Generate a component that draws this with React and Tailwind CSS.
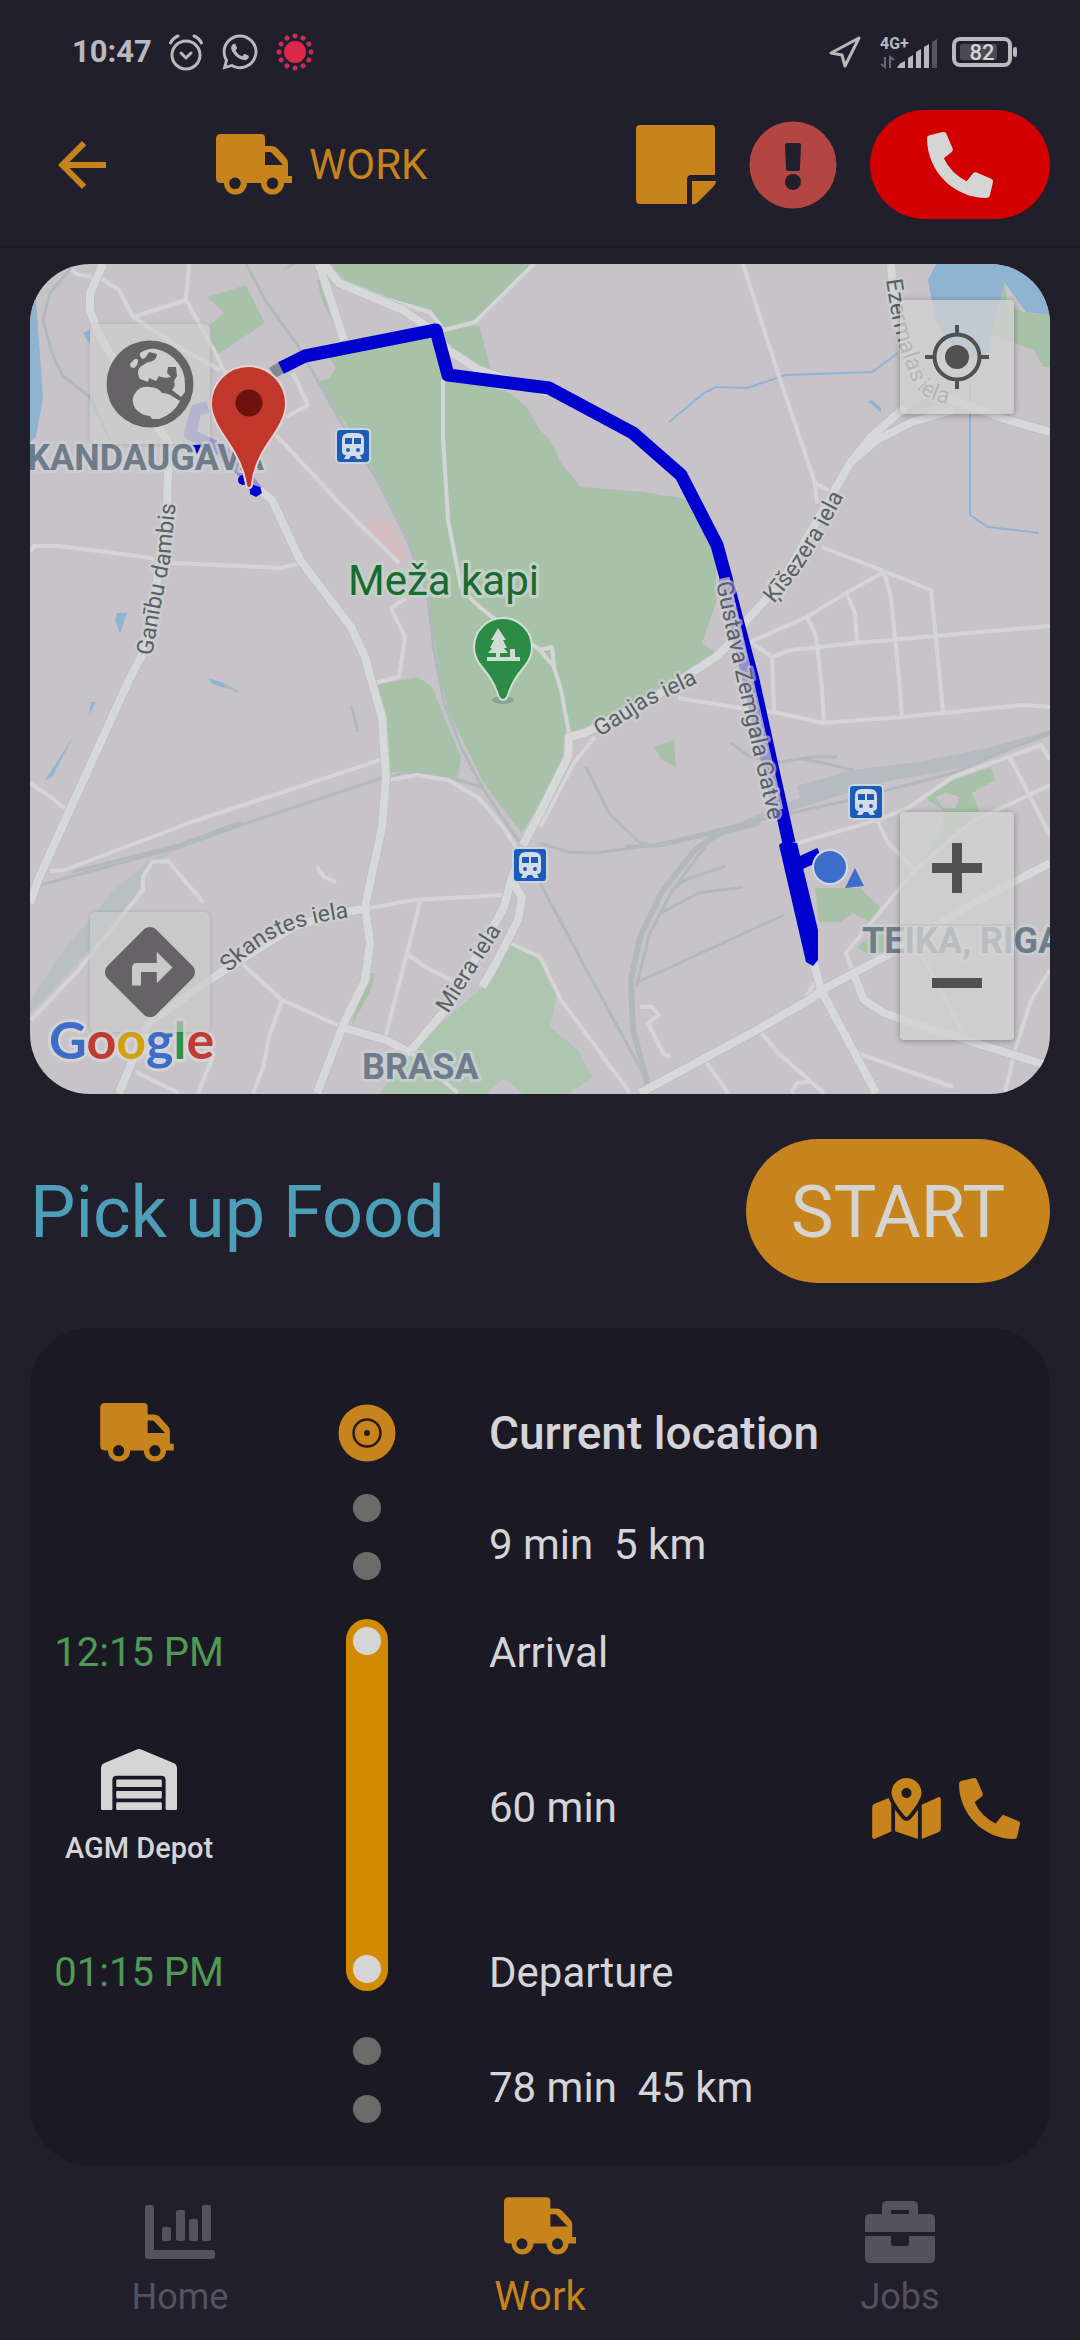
import React from "react";
import { FaMapMarkedAlt, FaPhoneAlt, FaWarehouse, FaWhatsapp } from "react-icons/fa";
import { MdArrowBack, MdDirections } from "react-icons/md";

/* ---------- icons ---------- */

function Truck({ className }) {
  return (
    <svg viewBox="0 0 76 62" className={className} fill="currentColor" aria-hidden="true">
      <path
        fillRule="evenodd"
        d="M5 0H45Q49 0 49 4V12H55Q59 12 61 14L70 24Q72 26 72 29V42H76V49H68A11.5 11.5 0 1 1 45 49H31A11.5 11.5 0 1 1 8 49H5Q0 49 0 44V5Q0 0 5 0ZM49 18V31H67L56 19Q55 18 53 18ZM19 43.5A5.8 5.8 0 1 0 19 55.100A5.8 5.8 0 1 0 19 43.5ZM56.500 43.5A5.800 5.800 0 1 0 56.500 55.100A5.800 5.800 0 1 0 56.500 43.500Z"
      />
    </svg>
  );
}

function Note() {
  return (
    <svg viewBox="0 0 80 80" className="w-20 h-20" fill="currentColor" aria-hidden="true">
      <path d="M4 0H76Q79 0 79 4V50H55Q51 50 51 55V79H4Q0 79 0 75V4Q0 0 4 0Z" />
      <path d="M56 56H80Q80 59 77 62L62 77Q59 80 56 79Z" />
    </svg>
  );
}

function Alarm() {
  return (
    <svg viewBox="0 0 36 38" className="w-9 h-[38px]" fill="none" stroke="currentColor" strokeWidth="3" strokeLinecap="round" strokeLinejoin="round" aria-hidden="true">
      <circle cx="18" cy="22" r="14" />
      <path d="M13 20L18 25L23 20" />
      <path d="M2.500 10Q5 5 10 3M33.500 10Q31 5 26 3" />
    </svg>
  );
}

function RecordDot() {
  return (
    <svg viewBox="-19 -19 38 38" className="w-[38px] h-[38px]" fill="#dc2748" aria-hidden="true">
      <circle r="11" />
      {[0, 30, 60, 90, 120, 150, 180, 210, 240, 270, 300, 330].map((a) => (
        <circle key={a} cx="0" cy="-16" r="2.500" transform={`rotate(${a})`} fill="#c23157" />
      ))}
    </svg>
  );
}

function Signal() {
  return (
    <svg viewBox="0 -4 60 40" className="w-[60px] h-10" fill="currentColor" aria-hidden="true">
      <text x="0" y="13" className="font-[Roboto] text-[16px] font-bold">4G+</text>
      <path d="M5 21V31L1 28M10 32V21L14 24" fill="none" stroke="#6a6872" strokeWidth="2" />
      <path d="M17 32Q19 27 25 25V32ZM28 22L33 19V32H28ZM36 16L41 13V32H36ZM44 11L49 8V32H44Z" />
      <path d="M52 6L57 3V32H52Z" fill="#55535d" />
    </svg>
  );
}

function Battery() {
  return (
    <svg viewBox="0 0 68 30" className="w-[68px] h-[30px]" aria-hidden="true">
      <rect x="2" y="2" width="56" height="26" rx="6" fill="none" stroke="#b9b8bd" strokeWidth="4" />
      <rect x="8" y="7" width="37" height="16" rx="2" fill="#4b4954" />
      <rect x="61" y="10" width="4" height="10" rx="2" fill="#b9b8bd" />
      <text x="30" y="23" textAnchor="middle" fill="#d6d5d9" className="font-[Roboto] text-[22px] font-medium">82</text>
    </svg>
  );
}

function Globe() {
  return (
    <svg viewBox="-44 -44 88 88" className="w-[88px] h-[88px]" aria-hidden="true">
      <circle r="43.500" fill="#666367" />
      <g fill="#cdcdcd">
        <path d="M-10 -31Q-2 -36 6 -35Q20 -32 28 -21Q35 -12 35 0V8L31 13Q26 9 22 6Q26 2 24 -3L27 -8L26 -17H18L17 -11L21 -7Q14 -5 9 -8L6 -3L-1 -6L-2 -2L-10 -5Q-14 -12 -10 -17L-2 -22Q6 -22 7 -30L-1 -32L-4 -27L-7 -25Q-11 -27 -10 -31Z" />
        <path d="M-20 -20Q-14 -28 -12 -24Q-12 -18 -16 -16Q-20 -16 -20 -20Z" />
        <path d="M-14 8Q-10 2 0 3Q8 3 12 9Q18 9 22 12L30 17Q24 30 9 35L2 35L0 32Q-10 31 -15 24Q-20 15 -14 8Z" />
      </g>
    </svg>
  );
}

function Crosshair() {
  return (
    <svg viewBox="-32 -32 64 64" className="w-16 h-16" fill="none" stroke="#515151" strokeWidth="4" aria-hidden="true">
      <circle r="22.500" />
      <circle r="12" fill="#515151" stroke="none" />
      <path d="M0 -32V-22M0 32V22M-32 0H-22M32 0H22" />
    </svg>
  );
}

function Target() {
  return (
    <svg viewBox="-29 -29 58 58" className="w-[58px] h-[58px]" aria-hidden="true">
      <circle r="28.500" fill="#c7841d" />
      <circle r="13.500" fill="none" stroke="#2a1c14" strokeWidth="2.500" />
      <circle r="3" fill="#2a1c14" />
    </svg>
  );
}

function Chart() {
  return (
    <svg viewBox="0 0 70 54" className="w-[70px] h-[54px]" fill="currentColor" aria-hidden="true">
      <path d="M2 0H6Q9 0 9 3V45H67Q70 45 70 48V51Q70 54 67 54H3Q0 54 0 51V3Q0 0 2 0Z" />
      <rect x="17" y="22" width="9" height="14" rx="2" />
      <rect x="31" y="5" width="9" height="31" rx="2" />
      <rect x="44" y="14" width="9" height="22" rx="2" />
      <rect x="57" y="0" width="9" height="36" rx="2" />
    </svg>
  );
}

function Briefcase() {
  return (
    <svg viewBox="0 0 70 62" className="w-[70px] h-[62px]" fill="currentColor" aria-hidden="true">
      <path d="M5 13H17V5Q17 0 22 0H48Q53 0 53 5V13H65Q70 13 70 18V31H0V18Q0 13 5 13ZM26 9V13H44V9Z" fillRule="evenodd" />
      <path d="M0 35H26V42Q26 45 29 45H41Q44 45 44 42V35H70V57Q70 62 65 62H5Q0 62 0 57Z" />
    </svg>
  );
}

/* ---------- map drawing ---------- */

const parks = [
  "207,297 246,285 265,323 214,357 210,325 224,313",
  "329,264 534,264 479,320 444,330 430,312 389,300 345,280",
  "317,280 324,276 342,328 334,325 322,300",
  "444,330 479,325 492,373 479,370 448,350",
  "281,272 296,264 290,264",
  "303,357 436,330 448,372 510,393 527,407 540,430 550,440 561,463 581,487 643,492 681,498 702,503 716,550 716,603 702,643 716,653 650,697 595,723 571,733 568,747 540,803 522,833 506,813 482,780 448,710 441,680 427,593 406,537 379,480 348,427 317,383 329,378 336,368 324,350",
  "375,685 418,677 432,687 461,757 458,777 406,771 388,773 382,717",
  "654,747 674,740 676,767 662,760",
  "815,888 860,888 881,908 871,923 853,913 840,922 819,922",
  "924,797 953,780 991,767 995,780 972,793 979,810 946,847 919,867 943,827 943,810",
  "857,947 884,926 884,952 870,956",
  "365,973 375,973 370,992 351,1027",
  "1005,282 1008,307 1029,313 1050,315 1050,367 1043,367 1034,350 998,337 991,333",
  "899,415 936,392 952,400",
];

const waters = [
  "30,300 36,300 43,397 36,437 30,442",
  "936,264 1050,264 1050,315 1026,312 1005,283 988,353 964,360 936,323 928,280",
  "117,613 127,613 120,633 115,620",
  "208,678 224,683 228,689 212,684",
  "91,702 96,702 89,715",
  "73,737 52,777 45,780",
  "83,333 90,330 90,345",
  "868,401 872,400 881,408 881,413",
];

const streams = [
  "669,422 704,393 716,387 747,388 786,375 872,372 898,353",
  "970,383 970,515 988,527 1039,533",
];

const rails = [
  "71,268 50,293 43,320 52,353 62,375 90,397 110,440",
  "246,264 265,300 296,343 344,427 379,483 406,537 427,593 434,650 444,703 461,747 482,787 499,813 520,843",
  "41,885 179,847 241,825 382,778",
  "72,872 179,845 241,822",
  "388,778 406,772 448,777 482,787",
  "224,685 239,692",
  "351,705 358,732",
  "540,843 568,852 595,853 654,845 760,820 850,800 953,773 1050,732",
  "586,767 609,813 640,843 654,845",
  "626,846 660,846 720,832",
  "731,743 750,757 781,762 812,757 838,757",
  "800,759 819,762 853,770",
  "540,883 592,980 643,1073",
  "726,866 685,880 672,890",
  "743,887 698,893 661,913",
  "784,915 636,983",
  "712,837 671,893 650,933 636,987",
];

const mainRoads = [
  "103,264 90,293 90,310 98,333 138,400 169,443 167,507 152,617 141,657 129,680 38,880 30,903",
  "260,490 272,500 300,560 351,627 365,657 374,690 382,717 386,777 382,827 365,907 370,943 365,980 344,1023 317,1093",
  "319,264 344,340",
  "324,264 339,283 403,310 427,327 448,350 479,370 548,393",
  "370,908 337,913 293,927 220,973 148,1023 119,1093",
  "523,850 511,880 504,907 482,947 448,1007 411,1050",
  "513,883 522,897 518,920 496,963 482,987",
  "523,845 540,813 568,757 569,737 585,733 650,700 716,657 733,640 747,620 781,583 833,493 850,463 871,437 905,407",
  "891,264 895,317 919,383 953,400 1008,420 1050,432",
  "850,463 877,440 912,422 953,410",
  "640,1093 757,1030 809,1000 822,990 884,957 974,903 1050,863",
  "814,963 821,990 876,1093",
  "344,1028 386,1040 411,1053",
  "852,970 864,1000 884,1013 919,1025 1039,1063 1050,1068",
];

const minorRoads = [
  "71,270 79,275 100,278 119,290 133,317 179,347 220,370",
  "133,317 186,300 189,264",
  "186,300 214,350 238,400",
  "339,280 389,300 430,312 444,330 475,322 534,264",
  "30,552 34,546 59,546 145,557 172,563 282,568 300,563",
  "276,435 358,523 399,563",
  "286,417 308,405 293,373",
  "406,598 391,608 405,637 399,677 375,683",
  "443,380 443,437 448,520 461,587 475,603 492,617 540,650 554,667",
  "540,650 552,647 554,667 561,690 569,733",
  "30,783 52,798 67,810",
  "50,871 65,870 189,823 380,760",
  "388,780 417,775 448,780 479,798 503,827 516,847",
  "203,902 168,861 152,862 143,877 143,890 76,973 31,1020",
  "370,908 413,900 504,895",
  "421,898 386,1035",
  "408,955 427,968 455,982",
  "241,963 282,1000 344,1028",
  "411,1053 458,1093",
  "282,1000 269,1037 263,1068 253,1093",
  "136,1072 179,1093",
  "213,1057 198,1093",
  "317,867 324,877 336,882",
  "510,943 540,957 561,1000 630,1093",
  "595,737 574,763 540,827",
  "743,264 778,373 815,483 817,503",
  "815,483 833,493",
  "822,547 886,572 931,590 941,690 943,713",
  "750,642 807,617 846,593 884,572 891,597 895,637 900,690 902,717",
  "807,617 815,633 817,643 822,690 824,722",
  "846,593 855,613 857,643",
  "750,642 772,657 791,650 855,643 1050,626",
  "772,657 774,710",
  "678,698 733,707 774,712 824,723 902,717 943,713 1022,705 1050,707",
  "815,983 802,1003",
  "798,843 877,820 908,808 953,777 1041,745 1050,760",
  "1010,758 1050,835",
  "1050,785 970,823 915,870 884,907 846,953 852,970",
  "877,820 888,843 915,870",
  "1050,970 1031,1000 1015,1050 1005,1093",
  "919,950 967,1040",
  "759,1030 778,1053 809,1080 824,1093",
  "705,1060 728,1093",
  "857,1053 953,1087",
  "640,1007 652,1007 659,1015 648,1023 664,1055 671,1056",
  "791,1093 797,1083 809,1082",
];

function Lines({ items, stroke, width }) {
  return (
    <g fill="none" stroke={stroke} strokeWidth={width} strokeLinejoin="round">
      {items.map((p) => (
        <polyline key={p} points={p} />
      ))}
    </g>
  );
}

function Areas({ items, fill }) {
  return (
    <g fill={fill}>
      {items.map((p) => (
        <polygon key={p} points={p} />
      ))}
    </g>
  );
}

function Station({ x, y }) {
  return (
    <g transform={`translate(${x} ${y})`}>
      <rect x="-18" y="-18" width="36" height="36" rx="5" fill="#c9d6e2" />
      <rect x="-16" y="-16" width="32" height="32" rx="3" fill="#1c5cb8" />
      <path d="M-11 -6Q-11 -13 -4 -13H4Q11 -13 11 -6V5Q11 9 7 9L9 13H4L2 10H-2L-4 13H-9L-7 9Q-11 9 -11 5Z" fill="#d3dce6" />
      <path d="M-8 -8H-1V-2H-8ZM1 -8H8V-2H1Z" fill="#1c5cb8" />
      <circle cx="-5" cy="4" r="2" fill="#1c5cb8" />
      <circle cx="5" cy="4" r="2" fill="#1c5cb8" />
    </g>
  );
}

const streets = [
  ["Ganību dambis", "M152 656L160 610L170 560L176 500"],
  ["Gaujas iela", "M600 737L645 708L710 677"],
  ["Ķīšezera iela", "M774 604L801 570L826 530L852 480"],
  ["Skanstes iela", "M229 973Q258 943 290 931Q311 922 360 916"],
  ["Miera iela", "M448 1014L474 973L505 925"],
  ["Ezermalas iela", "M886 280L892 318L900 348L912 382Q920 396 936 401L975 412"],
  ["Gustava Zemgala Gatve", "M716 583L738 685L772 835"],
];

function MapDrawing() {
  return (
    <svg viewBox="30 264 1020 830" className="block w-full h-auto" role="img" aria-label="Route map">
      <rect x="30" y="264" width="1020" height="830" fill="#c8c3c8" />
      <Areas items={waters} fill="#8fb4d2" />
      <Areas items={parks} fill="#a8c2a9" />
      <polygon points="482,988 511,945 540,957 557,993 550,1027 578,1050 592,1077 568,1094 523,1094 504,1078 486,1094 379,1094 410,1053 424,1038" fill="#aec5b0" />
      <polygon points="936,797 946,793 960,797 955,808 943,808" fill="#c8c3c8" />
      <polygon points="360,527 379,517 389,523 408,553 399,563" fill="#d3bdbe" />
      <Lines items={streams} stroke="#8fb4d2" width="2" />
      <polygon points="797,786 853,770 919,762 988,748 1050,730 1050,736 960,768 884,782 802,807 745,826 730,826 800,798" fill="#b5bbbe" />
      <polygon points="179,846 148,862 114,890 60,955 30,1000 30,1014 80,960 132,902 150,868" fill="#b9c0c2" />
      <Lines items={rails} stroke="#b2b9bc" width="3" />
      <Lines items={["760,822 719,833 695,850 661,893 640,937 631,980 633,1030 650,1093"]} stroke="#b2b9bc" width="6" />
      <Lines items={minorRoads} stroke="#d5d4d6" width="4" />
      <Lines items={mainRoads} stroke="#bfc0c2" width="10" />
      <Lines items={mainRoads} stroke="#d7d8d9" width="8" />

      {/* route */}
      <Lines items={["208,407 196,410 190,434 220,449 241,470 257,491"]} stroke="#9692cb" width="12" />
      <g fill="#0000cf">
        <path d="M192 445H202L197 454Z" />
        <circle cx="243" cy="480" r="5" />
        <path d="M250 484L260 487L262 493L256 497L250 494Z" />
      </g>
      <Lines items={["272,373 286,365"]} stroke="#7f8c98" width="12" />
      <Lines items={["281,368 305,356 436,330 448,375 549,388 633,433 681,475 717,545 726,578 753,680 789,843"]} stroke="#0000cf" width="13" />
      <path d="M779 845L784 841L797 843L818 930V960L813 966L806 962Z" fill="#0000cf" />
      <Lines items={["798,864 820,854"]} stroke="#0000cf" width="13" />
      <Lines items={["724,578 748,680 778,810"]} stroke="#9692cb" width="11" />

      {/* street names */}
      <g className="font-[Roboto] text-[23px]" fill="#5b6064" stroke="#d0d3d5" strokeWidth="5" strokeLinejoin="round" strokeOpacity="0.6" style={{ paintOrder: "stroke" }}>
        {streets.map(([name, d], i) => (
          <React.Fragment key={name}>
            <path id={`street-${i}`} d={d} fill="none" stroke="none" />
            <text>
              <textPath href={`#street-${i}`}>{name}</textPath>
            </text>
          </React.Fragment>
        ))}
      </g>

      {/* districts */}
      <g className="font-[Roboto] text-[36px] font-bold" fill="#6f7c8b" stroke="#ccd0d3" strokeWidth="6" strokeLinejoin="round" strokeOpacity="0.8" style={{ paintOrder: "stroke" }}>
        <text x="264" y="470" textAnchor="end">KANDAUGAVA</text>
        <text x="362" y="1079">BRASA</text>
        <text x="862" y="953">TEIKA, RIGA</text>
      </g>
      <text x="348" y="595" className="font-[Roboto] text-[42px]" fill="#186a32" stroke="#c3d0c6" strokeWidth="6" strokeLinejoin="round" style={{ paintOrder: "stroke" }}>Meža kapi</text>

      <Station x={353} y={446} />
      <Station x={530} y={865} />
      <Station x={866} y={802} />

      {/* park pin */}
      <ellipse cx="503" cy="700" rx="11" ry="4" fill="#8aa58d" />
      <path d="M503 700Q499 700 497 692Q493 680 482 667Q474 658 474 647A29 29 0 0 1 532 647Q532 658 524 667Q513 680 509 692Q507 700 503 700Z" fill="#2b8b47" stroke="#cfe0d3" strokeWidth="2" />
      <path d="M498 628L506 640H503L507 648H504L508 653H500V657H510V649H515V657H520V661H487V657H496V653H488L492 648H490L494 640H491Z" fill="#cfdcd2" />

      {/* current position */}
      <circle cx="830" cy="867" r="18" fill="#d5d9e0" />
      <circle cx="830" cy="867" r="16" fill="#3b6fc9" />
      <path d="M855 868L864 886L845 888Z" fill="#3b6fc9" />

      {/* destination pin */}
      <path d="M249 488Q246 488 246 484Q243 463 226 439Q211 418 211 404A37.500 38 0 0 1 286 404Q286 418 271 439Q254 463 252 484Q252 488 249 488Z" fill="#c1372c" stroke="#e0d5d4" strokeWidth="2" />
      <circle cx="249" cy="403" r="13.500" fill="#6e120e" />

      <text x="49" y="1059" className="font-[Lato] text-[52px] font-bold" stroke="#d4d3d5" strokeWidth="6" strokeLinejoin="round" style={{ paintOrder: "stroke" }}>
        <tspan fill="#3d6dc9">G</tspan>
        <tspan fill="#c23a34">o</tspan>
        <tspan fill="#d3a012">o</tspan>
        <tspan fill="#3d6dc9">g</tspan>
        <tspan fill="#2f9148">l</tspan>
        <tspan fill="#c23a34">e</tspan>
      </text>
    </svg>
  );
}

/* ---------- timeline ---------- */

function Dots() {
  return (
    <div className="flex flex-col items-center gap-[30px]">
      <span className="size-7 rounded-full bg-[#6b6b6b]" />
      <span className="size-7 rounded-full bg-[#6b6b6b]" />
    </div>
  );
}

function Leg({ time, distance }) {
  return (
    <li className="grid grid-cols-[21%_24%_1fr] items-center h-[118px]">
      <span />
      <Dots />
      <p className="pt-4 whitespace-pre">{time}  {distance}</p>
    </li>
  );
}

function NavItem({ icon, label, active }) {
  return (
    <a
      href="#"
      aria-current={active ? "page" : undefined}
      className={
        active
          ? "flex flex-col items-center justify-end text-[40px] leading-12 text-[#c7841d]"
          : "flex flex-col items-center justify-end text-[36px] leading-12 text-[#54525e]"
      }
    >
      <span className={active ? "flex h-[66px] items-center pb-1" : "flex h-[62px] items-center"}>{icon}</span>
      <span className={active ? "mt-3" : "mt-[10px]"}>{label}</span>
    </a>
  );
}

export default function App() {
  return (
    <div className="min-h-screen flex flex-col bg-[#211f2b] font-[Roboto,sans-serif] text-[#d5d4d8]">
      <div className="flex h-[103px] items-center justify-between pl-[72px] pr-[60px] text-[#b9b8bd]">
        <div className="flex items-center">
          <span className="text-[31px] font-bold leading-none">10:47</span>
          <span className="ml-4 flex items-center gap-4">
            <Alarm />
            <FaWhatsapp className="size-10" aria-hidden="true" />
            <RecordDot />
          </span>
        </div>
        <div className="flex items-center">
          <svg viewBox="0 0 34 34" className="size-[34px]" fill="none" stroke="currentColor" strokeWidth="3" strokeLinejoin="round" aria-hidden="true">
            <path d="M31 3L3 18L14 20L17 31Z" />
          </svg>
          <span className="ml-[18px]"><Signal /></span>
          <span className="ml-3"><Battery /></span>
        </div>
      </div>

      <header className="flex items-center justify-between border-b-2 border-[#1e1c27] pt-[7px] pb-[27px] px-[30px]">
        <div className="flex items-center text-[#c7841d]">
          <button type="button" aria-label="Back" className="ml-4">
            <MdArrowBack className="size-18" />
          </button>
          <Truck className="ml-[98px] w-[76px] h-[62px]" />
          <h1 className="ml-[17px] text-[42px] leading-none">WORK</h1>
        </div>
        <div className="flex items-center gap-[33px]">
          <button type="button" aria-label="Notes" className="text-[#c7841d]">
            <Note />
          </button>
          <button type="button" aria-label="Report a problem">
            <svg viewBox="-44 -44 88 88" className="w-[88px] h-[88px]" aria-hidden="true">
              <circle r="43.500" fill="#b34642" />
              <path d="M-6 -22H6Q8 -22 8 -20L7 4Q7 6 5 6H-5Q-7 6 -7 4L-8 -20Q-8 -22 -6 -22Z" fill="#211f2b" />
              <circle cy="17" r="8" fill="#211f2b" />
            </svg>
          </button>
          <button type="button" aria-label="Call" className="flex h-[109px] w-[180px] items-center justify-center rounded-full bg-[#d20000]">
            <FaPhoneAlt className="size-[66px] text-[#d5d5d5]" />
          </button>
        </div>
      </header>

      <main className="flex-1 px-[30px] pt-4">
        <section className="relative overflow-hidden rounded-[60px]">
          <MapDrawing />
          <button type="button" aria-label="Map layers" className="absolute left-[60px] top-[60px] flex h-[120px] w-[120px] items-center justify-center rounded-md bg-[#d0d1d0]/55 shadow-[0_0_4px_#0002]">
            <Globe />
          </button>
          <button type="button" aria-label="Directions" className="absolute left-[60px] bottom-[62px] flex h-[120px] w-[120px] items-center justify-center rounded-md bg-[#cbcccb]/65 shadow-[0_0_4px_#0002]">
            <MdDirections className="size-[108px] text-[#666367]" />
          </button>
          <button type="button" aria-label="My location" className="absolute right-9 top-9 flex h-[114px] w-[114px] items-center justify-center rounded bg-[#d2d2d2]/75 shadow-[0_1px_6px_#0005]">
            <Crosshair />
          </button>
          <div className="absolute right-9 bottom-[54px] flex w-[114px] flex-col divide-y-2 divide-[#c6c6c6] rounded bg-[#d2d2d2]/75 shadow-[0_1px_6px_#0005]">
            <button type="button" aria-label="Zoom in" className="flex h-[114px] items-center justify-center">
              <svg viewBox="0 0 50 50" className="size-[50px]" fill="#515151" aria-hidden="true">
                <path d="M20 0H30V20H50V30H30V50H20V30H0V20H20Z" />
              </svg>
            </button>
            <button type="button" aria-label="Zoom out" className="flex h-[114px] items-center justify-center">
              <span className="h-[10px] w-[50px] bg-[#515151]" />
            </button>
          </div>
        </section>

        <section className="mt-[45px] flex items-center justify-between">
          <h2 className="pt-1 text-[72px] leading-none text-[#4d9fb9]">Pick up Food</h2>
          <button type="button" className="flex h-36 w-[304px] items-center justify-center rounded-full bg-[#c7841d] pt-1 text-[72px] text-[#d6d4d0]">
            START
          </button>
        </section>

        <ol className="mt-[45px] rounded-[60px] bg-[#1b1924] pt-[60px] pb-[26px] text-[42px] leading-12">
          <li className="grid grid-cols-[21%_24%_1fr] items-center h-[90px]">
            <Truck className="justify-self-center w-[74px] h-[60px] text-[#c7841d]" />
            <span className="justify-self-center"><Target /></span>
            <p className="text-[46px] font-medium">Current location</p>
          </li>
          <Leg time="9 min" distance="5 km" />
          <li className="mt-[23px] mb-6 grid grid-cols-[21%_24%_1fr] h-[378px]">
            <div className="flex flex-col items-center justify-between pt-[10px] pl-1">
              <time className="text-[40px] text-[#4f9a52]">12:15 PM</time>
              <div className="flex flex-col items-center gap-5 pb-3">
                <FaWarehouse className="w-[76px] h-[61px] text-[#d5d5d5]" aria-hidden="true" />
                <span className="text-[29px] leading-9 font-medium">AGM Depot</span>
              </div>
              <time className="text-[40px] text-[#4f9a52]">01:15 PM</time>
            </div>
            <div className="mb-[6px] flex w-[42px] flex-col items-center justify-between justify-self-center rounded-full bg-[#d28b00] py-2">
              <span className="size-7 rounded-full bg-[#d5d5d5]" />
              <span className="size-7 rounded-full bg-[#d5d5d5]" />
            </div>
            <div className="flex flex-col justify-between pt-[10px] pr-[30px]">
              <p>Arrival</p>
              <div className="flex items-center justify-between pb-[10px]">
                <p>60 min</p>
                <div className="flex items-center gap-[18px] text-[#c7841d]">
                  <button type="button" aria-label="Show on map"><FaMapMarkedAlt className="w-[69px] h-[61px]" /></button>
                  <button type="button" aria-label="Call depot"><FaPhoneAlt className="size-[61px]" /></button>
                </div>
              </div>
              <p>Departure</p>
            </div>
          </li>
          <Leg time="78 min" distance="45 km" />
        </ol>
      </main>

      <nav className="grid h-[175px] grid-cols-3 pb-[19px]">
        <NavItem icon={<Chart />} label="Home" />
        <NavItem icon={<Truck className="w-[72px] h-[59px]" />} label="Work" active />
        <NavItem icon={<Briefcase />} label="Jobs" />
      </nav>
    </div>
  );
}
